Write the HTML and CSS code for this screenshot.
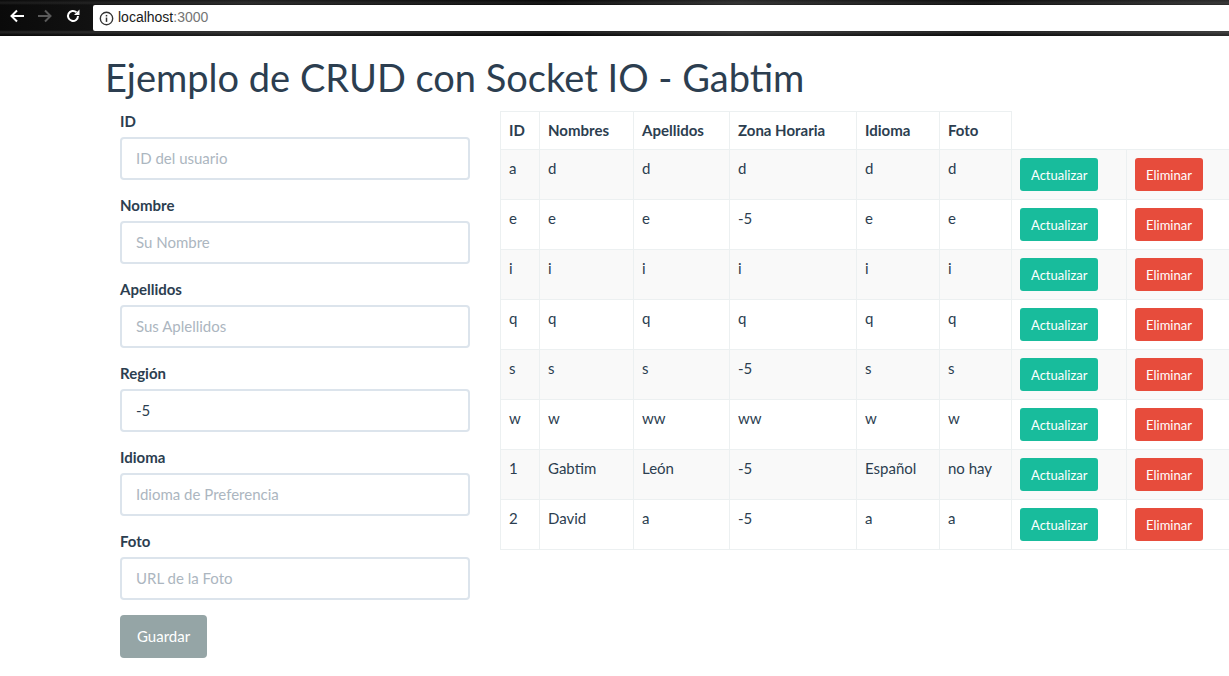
FILE: index.html
```html
<!DOCTYPE html>
<html lang="es">
<head>
<meta charset="utf-8">
<title>CRUD Socket IO</title>
<link rel="stylesheet" href="styles.css">
</head>
<body>
<div class="chrome">
  <div class="nav">
    <svg class="nav-icon" viewBox="0 0 16 16" width="16" height="16"><path d="M15 8H3M8 2.5L2.5 8 8 13.5" fill="none" stroke="#fff" stroke-width="2"/></svg>
    <svg class="nav-icon" viewBox="0 0 16 16" width="16" height="16"><path d="M1 8h12M8 2.5L13.5 8 8 13.5" fill="none" stroke="#5a5a5a" stroke-width="2"/></svg>
    <svg class="nav-icon" viewBox="0 0 16 16" width="16" height="16"><path d="M13 8a5 5 0 1 1-1.6-3.7" fill="none" stroke="#fff" stroke-width="2"/><path d="M14.5 1.5v5.5H9z" fill="#fff"/></svg>
  </div>
  <div class="omnibox">
    <svg class="info" viewBox="0 0 16 16" width="15" height="15"><circle cx="8" cy="8" r="6.6" fill="none" stroke="#333" stroke-width="1.5"/><rect x="7.2" y="7" width="1.6" height="4.6" fill="#333"/><rect x="7.2" y="4.2" width="1.6" height="1.6" fill="#333"/></svg>
    <span class="host">localhost</span><span class="port">:3000</span>
  </div>
</div>
<div class="page">
  <h1 class="title">Ejemplo de CRUD con Socket IO - Gabtim</h1>
  <div class="row">
    <form class="form-col">
      <div class="group"><label class="lbl">ID</label><input class="control" placeholder="ID del usuario"></div>
      <div class="group"><label class="lbl">Nombre</label><input class="control" placeholder="Su Nombre"></div>
      <div class="group"><label class="lbl">Apellidos</label><input class="control" placeholder="Sus Aplellidos"></div>
      <div class="group"><label class="lbl">Región</label><input class="control" value="-5"></div>
      <div class="group"><label class="lbl">Idioma</label><input class="control" placeholder="Idioma de Preferencia"></div>
      <div class="group"><label class="lbl">Foto</label><input class="control" placeholder="URL de la Foto"></div>
      <button type="button" class="btn btn-save">Guardar</button>
    </form>
    <div class="table-col">
      <table class="grid">
        <colgroup>
          <col class="c-id"><col class="c-nom"><col class="c-ape"><col class="c-zona"><col class="c-idi"><col class="c-foto"><col class="c-act"><col class="c-del">
        </colgroup>
        <thead>
          <tr><th>ID</th><th>Nombres</th><th>Apellidos</th><th>Zona Horaria</th><th>Idioma</th><th>Foto</th></tr>
        </thead>
        <tbody>
          <tr><td>a</td><td>d</td><td>d</td><td>d</td><td>d</td><td>d</td><td><button class="btn btn-sm btn-update">Actualizar</button></td><td><button class="btn btn-sm btn-delete">Eliminar</button></td></tr>
          <tr><td>e</td><td>e</td><td>e</td><td>-5</td><td>e</td><td>e</td><td><button class="btn btn-sm btn-update">Actualizar</button></td><td><button class="btn btn-sm btn-delete">Eliminar</button></td></tr>
          <tr><td>i</td><td>i</td><td>i</td><td>i</td><td>i</td><td>i</td><td><button class="btn btn-sm btn-update">Actualizar</button></td><td><button class="btn btn-sm btn-delete">Eliminar</button></td></tr>
          <tr><td>q</td><td>q</td><td>q</td><td>q</td><td>q</td><td>q</td><td><button class="btn btn-sm btn-update">Actualizar</button></td><td><button class="btn btn-sm btn-delete">Eliminar</button></td></tr>
          <tr><td>s</td><td>s</td><td>s</td><td>-5</td><td>s</td><td>s</td><td><button class="btn btn-sm btn-update">Actualizar</button></td><td><button class="btn btn-sm btn-delete">Eliminar</button></td></tr>
          <tr><td>w</td><td>w</td><td>ww</td><td>ww</td><td>w</td><td>w</td><td><button class="btn btn-sm btn-update">Actualizar</button></td><td><button class="btn btn-sm btn-delete">Eliminar</button></td></tr>
          <tr><td>1</td><td>Gabtim</td><td>León</td><td>-5</td><td>Español</td><td>no hay</td><td><button class="btn btn-sm btn-update">Actualizar</button></td><td><button class="btn btn-sm btn-delete">Eliminar</button></td></tr>
          <tr><td>2</td><td>David</td><td>a</td><td>-5</td><td>a</td><td>a</td><td><button class="btn btn-sm btn-update">Actualizar</button></td><td><button class="btn btn-sm btn-delete">Eliminar</button></td></tr>
        </tbody>
      </table>
    </div>
  </div>
</div>
</body>
</html>
```
FILE: styles.css
```css
html { overflow: hidden; }
body {
  margin: 0;
  font-family: Lato, "Open Sans", sans-serif;
  font-size: 15px;
  line-height: 1.42857;
  color: #2c3e50;
  background: #fff;
}
.chrome {
  height: 36px;
  display: flex;
  align-items: flex-start;
  background:
    linear-gradient(180deg, rgba(255,255,255,0) 0, rgba(255,255,255,0.08) 3px, rgba(0,0,0,0) 5px, rgba(0,0,0,0) 30px, rgba(255,255,255,0.12) 32px, rgba(0,0,0,0) 35px),
    linear-gradient(90deg, #0a0a0a 0, #1e1e1e 20%, #070707 45%, #262626 60%, #0d0d0d 80%, #2a2a2a 100%);
}
.nav {
  width: 93px;
  height: 36px;
  display: flex;
  align-items: center;
  gap: 12px;
  padding: 0 0 0 9px;
  box-sizing: border-box;
  margin-top: -2px;
}
.nav-icon { display: block; flex: none; }
.omnibox {
  flex: 1;
  height: 26px;
  margin-top: 5px;
  background: #fff;
  border-radius: 2px 0 0 2px;
  display: flex;
  align-items: center;
  padding-left: 6px;
  font-family: "Liberation Sans", Arial, sans-serif;
  font-size: 14px;
}
.info { margin-right: 4px; }
.host { color: #1a1a1a; }
.port { color: #757575; }
.page {
  padding-left: 90px;
}
.title {
  margin: 21px 0 12px;
  padding: 0 15px;
  font-size: 38px;
  font-weight: 400;
  line-height: 1.1;
  color: #2c3e50;
}
.row {
  display: flex;
  align-items: flex-start;
}
.form-col {
  flex: none;
  width: 350px;
  padding: 0 15px 0 30px;
  margin: 0;
}
.group { margin-bottom: 15px; }
.lbl {
  display: block;
  font-weight: 700;
  line-height: 21px;
  margin-bottom: 5px;
}
.control {
  display: block;
  width: 100%;
  box-sizing: border-box;
  height: 43px;
  padding: 0 14px;
  border: 2px solid #dce4ec;
  border-radius: 4px;
  font-family: Lato, sans-serif;
  font-size: 15px;
  color: #2c3e50;
  background: #fff;
  outline: none;
}
.control::placeholder { color: #acb6c0; }
.btn {
  font-family: Lato, sans-serif;
  border: none;
  color: #fff;
  cursor: pointer;
}
.btn-save {
  height: 43px;
  padding: 0 17px;
  font-size: 15px;
  border-radius: 4px;
  background: #95a5a6;
}
.table-col {
  flex: none;
  padding: 0 15px;
}
.grid {
  border-collapse: collapse;
  table-layout: fixed;
  width: 742px;
}
.c-id { width: 39px; }
.c-nom { width: 94px; }
.c-ape { width: 96px; }
.c-zona { width: 127px; }
.c-idi { width: 83px; }
.c-foto { width: 72px; }
.c-act { width: 115px; }
.c-del { width: 116px; }
.grid th, .grid td {
  border: 1px solid #ecf0f1;
  padding: 8px;
  text-align: left;
  vertical-align: top;
  white-space: nowrap;
}
.grid th { font-weight: 700; }
.grid tbody tr:nth-child(odd) { background: #f9f9f9; }
.btn-sm {
  display: block;
  height: 33px;
  padding: 0 11px;
  font-size: 13px;
  border-radius: 3px;
}
.btn-update { background: #18bc9c; }
.btn-delete { background: #e74c3c; }
```
